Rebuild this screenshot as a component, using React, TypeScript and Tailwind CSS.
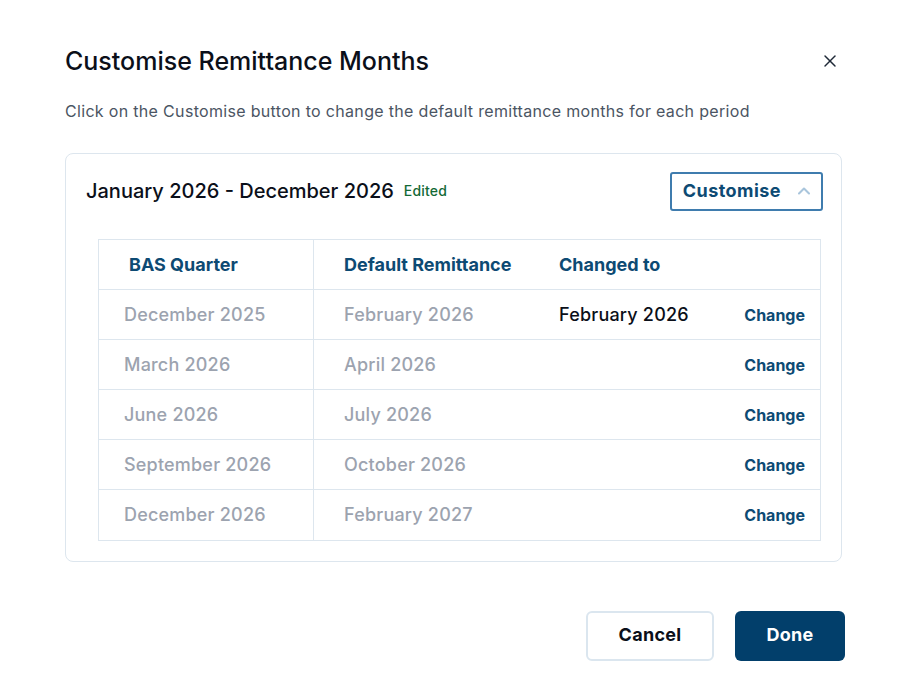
import React from "react";
import { X, ChevronUp } from "lucide-react";

const rows = [
  { quarter: "December 2025", remit: "February 2026", changed: "February 2026" },
  { quarter: "March 2026", remit: "April 2026", changed: "" },
  { quarter: "June 2026", remit: "July 2026", changed: "" },
  { quarter: "September 2026", remit: "October 2026", changed: "" },
  { quarter: "December 2026", remit: "February 2027", changed: "" },
];

const App = () => {
  return (
    <div
      className="w-[901px] h-[699px] bg-white text-[#0b0f19] pl-[65px] pr-[56px] pt-[44px]"
      style={{ fontFamily: "Inter, 'Noto Sans', sans-serif" }}
    >
      {/* Header */}
      <div className="flex items-center justify-between">
        <h1 className="text-[25px] leading-[34px] font-medium">
          Customise Remittance Months
        </h1>
        <button className="mr-[1px] p-1 text-[#1f2937]" aria-label="Close">
          <X className="w-[20px] h-[20px]" strokeWidth={1.75} />
        </button>
      </div>
      <p className="mt-[21px] text-[16px] leading-[24px] tracking-[0.32px] text-[#4b5563]">
        Click on the Customise button to change the default remittance months for each period
      </p>

      {/* Period card */}
      <div className="mt-[30px] w-[777px] border border-[#dde6ee] rounded-[8px] pl-[20px] pr-[18px] pt-[18px] pb-[20px]">
        <div className="flex items-center justify-between">
          <div className="flex items-center gap-[10px] pb-[2px]">
            <span className="text-[20px] leading-[28px] font-medium">
              January 2026 - December 2026
            </span>
            <span className="text-[14px] text-[#136a36] font-medium tracking-[0.2px]">Edited</span>
          </div>
          <button className="flex items-center gap-[13px] h-[39px] pl-[11px] pr-[7px] pb-[2px] border-2 border-[#3f7cae] rounded-[3px] text-[18px] font-bold text-[#0d4a73] tracking-[0.45px]">
            Customise
            <ChevronUp className="w-[20px] h-[20px] text-[#a9c5dc]" strokeWidth={2.5} />
          </button>
        </div>

        {/* Table */}
        <div className="mt-[28px] ml-[12px] mr-[2px] border border-[#dde6ee] grid grid-cols-[215px_215px_1fr_auto]">
          <div className="h-[50px] flex items-center pl-[30px] pb-[1px] text-[18px] font-bold text-[#0d4a73] border-r border-b border-[#dde6ee]">
            BAS Quarter
          </div>
          <div className="h-[50px] flex items-center pl-[30px] pb-[1px] text-[18px] font-bold text-[#0d4a73] border-b border-[#dde6ee]">
            Default Remittance
          </div>
          <div className="h-[50px] flex items-center pl-[30px] pb-[1px] text-[18px] font-bold text-[#0d4a73] border-b border-[#dde6ee]">
            Changed to
          </div>
          <div className="h-[50px] border-b border-[#dde6ee]" />
          {rows.map((r, i) => {
            const last = i === rows.length - 1;
            const b = last ? "" : "border-b border-[#dde6ee]";
            return (
              <React.Fragment key={r.quarter}>
                <div className={`h-[50px] flex items-center pl-[25px] pb-[1px] text-[18px] font-medium tracking-[0.2px] text-[#9ca3af] border-r border-[#dde6ee] ${b}`}>
                  {r.quarter}
                </div>
                <div className={`h-[50px] flex items-center pl-[30px] pb-[1px] text-[18px] font-medium tracking-[0.2px] text-[#9ca3af] ${b}`}>
                  {r.remit}
                </div>
                <div className={`h-[50px] flex items-center pl-[30px] pb-[1px] text-[18px] font-medium tracking-[0.2px] text-[#0b0f19] ${b}`}>
                  {r.changed}
                </div>
                <div className={`h-[50px] flex items-center justify-end pr-[15px] ${b}`}>
                  <button className="text-[16px] font-bold text-[#0d4a73]">Change</button>
                </div>
              </React.Fragment>
            );
          })}
        </div>
      </div>

      {/* Footer */}
      <div className="mt-[49px] flex justify-end gap-[21px]">
        <button className="w-[128px] h-[50px] pb-[3px] border-2 border-[#dbe6ef] rounded-[6px] text-[18px] font-bold tracking-[0.3px] text-[#0b0f19]">
          Cancel
        </button>
        <button className="w-[110px] h-[50px] pb-[3px] bg-[#023f6b] rounded-[6px] text-[18px] font-bold tracking-[0.3px] text-white">
          Done
        </button>
      </div>
    </div>
  );
};

export default App;
